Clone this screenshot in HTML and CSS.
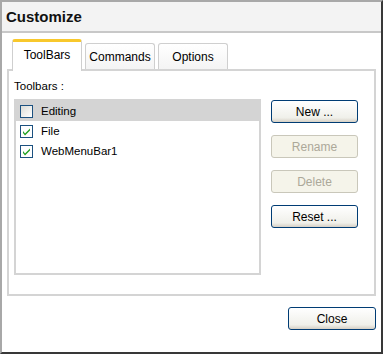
FILE: index.html
```html
<!DOCTYPE html>
<html lang="en">
<head>
  <meta charset="UTF-8" />
  <title>Customize</title>
  <link rel="stylesheet" href="styles.css">
</head>
<body>

  <div class="dialog">
    <div class="title-bar">Customize</div>

    <div class="body">
      <div class="tabs">
        <div class="tab active">ToolBars</div>
        <div class="tab">Commands</div>
        <div class="tab">Options</div>
      </div>

      <div class="panel">
        <div class="label">Toolbars :</div>
        <div class="panel-row">
          <div class="list">
            <div class="item selected"><span class="check"></span>Editing</div>
            <div class="item"><span class="check on"><svg viewBox="0 0 13 13" width="13" height="13"><path d="M3 6 L5 8.5 L10 3.5 L10 5.5 L5 10.5 L3 8 Z" fill="#21a121"/></svg></span>File</div>
            <div class="item"><span class="check on"><svg viewBox="0 0 13 13" width="13" height="13"><path d="M3 6 L5 8.5 L10 3.5 L10 5.5 L5 10.5 L3 8 Z" fill="#21a121"/></svg></span>WebMenuBar1</div>
          </div>
          <div class="buttons">
            <button>New ...</button>
            <button disabled>Rename</button>
            <button disabled>Delete</button>
            <button>Reset ...</button>
          </div>
        </div>
      </div>

      <div class="footer">
        <button class="close">Close</button>
      </div>
    </div>
  </div>

</body>
</html>
```

FILE: styles.css
```css
body {
  margin: 0;
  font-family: 'Liberation Sans', Arial, sans-serif;
  font-size: 11.5px;
  color: #000;
  background: #fff;
}

.dialog {
  width: 383px;
  height: 354px;
  box-sizing: border-box;
  border-left: 2px solid #a8a8a8;
  border-top: 2px solid #a8a8a8;
  border-right: 2px solid #383838;
  border-bottom: 2px solid #383838;
  background: #fff;
}

.title-bar {
  height: 29px;
  background: #f3f3f3;
  border-bottom: 2px solid #c8c8c8;
  padding-left: 4px;
  font-size: 15px;
  font-weight: bold;
  line-height: 29px;
  color: #111;
}

.body {
  padding: 5px 5px 0 5px;
}

.tabs {
  display: flex;
  align-items: flex-end;
  padding-left: 5px;
  height: 31px;
  gap: 3px;
}

.tab {
  box-sizing: border-box;
  height: 26px;
  border: 1px solid #cfcfcf;
  border-bottom: none;
  border-radius: 3px 3px 0 0;
  background: linear-gradient(#ffffff, #f4f4f4);
  text-align: center;
  line-height: 26px;
  font-size: 12px;
  width: 70px;
}

.tab.active {
  width: 70px;
  height: 32px;
  border-top: 3px solid #f8c82c;
  background: #fff;
  line-height: 27px;
  position: relative;
  z-index: 1;
  margin-bottom: -2px;
}

.panel {
  height: 227px;
  box-sizing: border-box;
  border: 2px solid #d4d4d4;
  padding: 9px 5px 0 5px;
}

.label {
  font-size: 11.5px;
  height: 19px;
}

.panel-row {
  display: flex;
  gap: 10px;
}

.list {
  width: 247px;
  height: 176px;
  box-sizing: border-box;
  border: 2px solid #d4d4d4;
}

.item {
  height: 20px;
  display: flex;
  align-items: center;
  padding-left: 4px;
  font-size: 11.5px;
}

.item.selected {
  background: #d4d4d4;
}

.check {
  box-sizing: border-box;
  width: 13px;
  height: 13px;
  border: 1px solid #1c5180;
  background: linear-gradient(135deg, #dcdcd6, #ffffff);
  margin-right: 8px;
  display: inline-block;
  position: relative;
}

.check svg {
  position: absolute;
  left: -1px;
  top: -1px;
}

.check.on {
  background: #fff;
}

.buttons {
  display: flex;
  flex-direction: column;
  gap: 12px;
  padding-top: 1px;
}

button {
  width: 87px;
  height: 23px;
  border: 1px solid #003c74;
  border-radius: 3px;
  background: linear-gradient(#ffffff, #f0f0ea 80%, #d6d0c5);
  font-family: 'Liberation Sans', Arial, sans-serif;
  font-size: 12px;
  color: #000;
  padding: 0;
}

button:disabled {
  border-color: #c9c7ba;
  background: #f5f4ea;
  color: #aca899;
}

.footer {
  display: flex;
  justify-content: flex-end;
  padding-top: 11px;
}

.close {
  width: 88px;
}
```
